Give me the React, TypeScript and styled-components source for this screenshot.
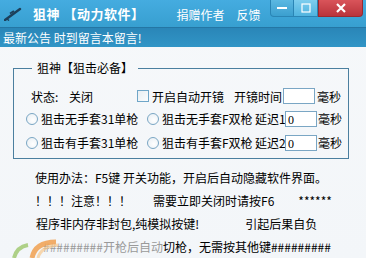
import React from 'react';
import styled, { createGlobalStyle } from 'styled-components';

const GlobalStyle = createGlobalStyle`
  html, body {
    margin: 0;
    padding: 0;
    background: #f4f7fa;
  }
  * {
    box-sizing: border-box;
  }
`;

const Window = styled.div`
  position: relative;
  width: 366px;
  height: 258px;
  overflow: hidden;
  background: linear-gradient(#f6f8fa, #f3f6f9);
  font-family: "Noto Sans CJK SC", "Liberation Sans", sans-serif;
  font-size: 12px;
  color: #000;
`;

const TitleBar = styled.div`
  display: flex;
  align-items: flex-start;
  height: 27px;
  background: linear-gradient(#45ace0, #379fd0);
  color: #fff;
`;

const TitleIcon = styled.div`
  width: 20px;
  height: 27px;
  margin-left: 4px;
  display: flex;
  align-items: center;
`;

const TitleText = styled.div`
  margin-left: 9px;
  height: 27px;
  line-height: 27px;
  font-size: 13px;
  font-weight: bold;
  letter-spacing: 0.5px;
`;

const TitleLinks = styled.div`
  display: flex;
  margin-left: 32px;
  height: 29px;
  line-height: 29px;
  gap: 12px;
`;

const TitleLink = styled.span`
  color: #fff;
  font-size: 12px;
`;

const WindowButtons = styled.div`
  display: flex;
  margin-left: auto;
  margin-right: 3px;
`;

const WinButton = styled.div<{ $kind: 'min' | 'max' | 'close' }>`
  display: flex;
  align-items: center;
  justify-content: center;
  height: 17px;
  width: ${p => (p.$kind === 'close' ? 45 : 24)}px;
  border: 1px solid ${p => (p.$kind === 'close' ? '#9a2a30' : '#2a85b5')};
  border-top: none;
  border-left: ${p => (p.$kind === 'max' ? 'none' : undefined)};
  border-radius: ${p =>
    p.$kind === 'min' ? '0 0 0 4px' : p.$kind === 'close' ? '0 0 4px 0' : '0'};
  background: ${p =>
    p.$kind === 'close'
      ? 'linear-gradient(#d9545a, #b9343b)'
      : p.$kind === 'max'
      ? 'linear-gradient(#7dcdee, #4fb3df)'
      : 'linear-gradient(#5cb8e2, #3b9fcf)'};
`;

const NoticeBar = styled.div`
  height: 20px;
  line-height: 20px;
  padding-left: 3px;
  background: linear-gradient(#2a86b8, #3195c6);
  border-top: 1px solid #2476a4;
  color: #fff;
  font-size: 12px;
`;

const Group = styled.fieldset`
  margin: 14px 0 0 13px;
  width: 336px;
  height: 98px;
  padding: 10px 0 0 12px;
  border: 1px solid #4b7f9f;
  border-radius: 0;
`;

const Legend = styled.legend`
  margin-left: 6px;
  padding: 0 5px;
  font-size: 12px;
  line-height: 14px;
`;

const Row = styled.div<{ $h: number }>`
  display: flex;
  align-items: center;
  height: ${p => p.$h}px;
  white-space: nowrap;
`;

const Cell = styled.span<{ $w?: number; $ml?: number }>`
  display: inline-block;
  ${p => (p.$w ? `width: ${p.$w}px;` : '')}
  margin-left: ${p => p.$ml ?? 0}px;
`;

const Checkbox = styled.span`
  display: inline-block;
  width: 12px;
  height: 12px;
  border: 1px solid #6fa6c8;
  background: linear-gradient(135deg, #e8eef2, #fafcfd);
  margin-left: 0;
`;

const Radio = styled.span<{ $ml?: number }>`
  display: inline-block;
  width: 12px;
  height: 12px;
  border-radius: 50%;
  border: 1px solid #7aa6c4;
  background: radial-gradient(circle at 60% 60%, #ffffff, #e6edf2);
  margin-left: ${p => p.$ml ?? 0}px;
`;

const Field = styled.div<{ $ml?: number }>`
  width: 32px;
  height: 16px;
  margin-left: ${p => p.$ml ?? 0}px;
  border: 1px solid #7aa6c4;
  background: #fff;
  font-size: 12px;
  line-height: 16px;
  padding-left: 2px;
  font-family: "Liberation Serif", serif;
`;

const Notes = styled.div`
  display: flex;
  flex-direction: column;
  margin-top: 7px;
`;

const NoteLine = styled.div<{ $pl: number }>`
  height: 23px;
  line-height: 23px;
  padding-left: ${p => p.$pl}px;
  white-space: nowrap;
`;

const Faded = styled.span`
  color: #9a9a9a;
`;

const Swoosh = styled.svg`
  position: absolute;
  left: 6px;
  bottom: 0;
`;

const Rifle = () => (
  <svg width="18" height="14" viewBox="0 0 18 14">
    <path d="M1 13 L16 2" stroke="#1d3f5a" strokeWidth="2.4" strokeLinecap="round" />
    <path d="M6 6.5 L10 4" stroke="#1d3f5a" strokeWidth="2" />
    <path d="M3 12 L5 13.5" stroke="#1d3f5a" strokeWidth="1.5" />
  </svg>
);

const App: React.FC = () => {
  return (
    <>
      <GlobalStyle />
      <Window>
        <TitleBar>
          <TitleIcon>
            <Rifle />
          </TitleIcon>
          <TitleText>狙神 【动力软件】</TitleText>
          <TitleLinks>
            <TitleLink>捐赠作者</TitleLink>
            <TitleLink>反馈</TitleLink>
          </TitleLinks>
          <WindowButtons>
            <WinButton $kind="min">
              <svg width="10" height="4"><rect x="0" y="1" width="10" height="2" fill="#fff" /></svg>
            </WinButton>
            <WinButton $kind="max">
              <svg width="10" height="10"><rect x="1" y="1" width="8" height="8" fill="none" stroke="#fff" strokeWidth="1.2" /></svg>
            </WinButton>
            <WinButton $kind="close">
              <svg width="10" height="10">
                <path d="M1 1 L9 9 M9 1 L1 9" stroke="#fff" strokeWidth="2.2" />
              </svg>
            </WinButton>
          </WindowButtons>
        </TitleBar>
        <NoticeBar>最新公告 时到留言本留言!</NoticeBar>

        <Group>
          <Legend>狙神【狙击必备】</Legend>
          <Row $h={22}>
            <Cell $w={38} $ml={5}>状态:</Cell>
            <Cell $w={68}>关闭</Cell>
            <Checkbox />
            <Cell $ml={3}>开启自动开镜</Cell>
            <Cell $ml={10}>开镜时间</Cell>
            <Field $ml={1} />
            <Cell $ml={2}>毫秒</Cell>
          </Row>
          <Row $h={23}>
            <Radio />
            <Cell $w={106} $ml={3}>狙击无手套31单枪</Cell>
            <Radio />
            <Cell $w={93} $ml={3}>狙击无手套F双枪</Cell>
            <Cell $w={30}>延迟1</Cell>
            <Field>0</Field>
            <Cell $ml={1}>毫秒</Cell>
          </Row>
          <Row $h={25}>
            <Radio />
            <Cell $w={106} $ml={3}>狙击有手套31单枪</Cell>
            <Radio />
            <Cell $w={93} $ml={3}>狙击有手套F双枪</Cell>
            <Cell $w={30}>延迟2</Cell>
            <Field>0</Field>
            <Cell $ml={1}>毫秒</Cell>
          </Row>
        </Group>

        <Notes>
          <NoteLine $pl={35}>使用办法：F5键 开关功能，开启后自动隐藏软件界面。</NoteLine>
          <NoteLine $pl={35}>
            ！！！注意！！！
            <Cell $ml={22}>需要立即关闭时请按F6</Cell>
            <Cell $ml={24}>******</Cell>
          </NoteLine>
          <NoteLine $pl={36}>
            程序非内存非封包,纯模拟按键!
            <Cell $ml={46}>引起后果自负</Cell>
          </NoteLine>
          <NoteLine $pl={43}>
            <Faded>#########开枪后自动</Faded>切枪，无需按其他键#########
          </NoteLine>
        </Notes>

        <Swoosh width="60" height="22" viewBox="0 0 60 22">
          <path d="M8 22 C10 14 16 10 22 9" stroke="#9cc76a" strokeWidth="4" fill="none" opacity="0.8" />
          <path d="M26 22 C28 12 36 6 50 6" stroke="#f0a050" strokeWidth="5" fill="none" opacity="0.85" />
          <path d="M32 22 C34 14 40 10 52 9" stroke="#f7c98f" strokeWidth="3" fill="none" opacity="0.7" />
        </Swoosh>
      </Window>
    </>
  );
};

export default App;
